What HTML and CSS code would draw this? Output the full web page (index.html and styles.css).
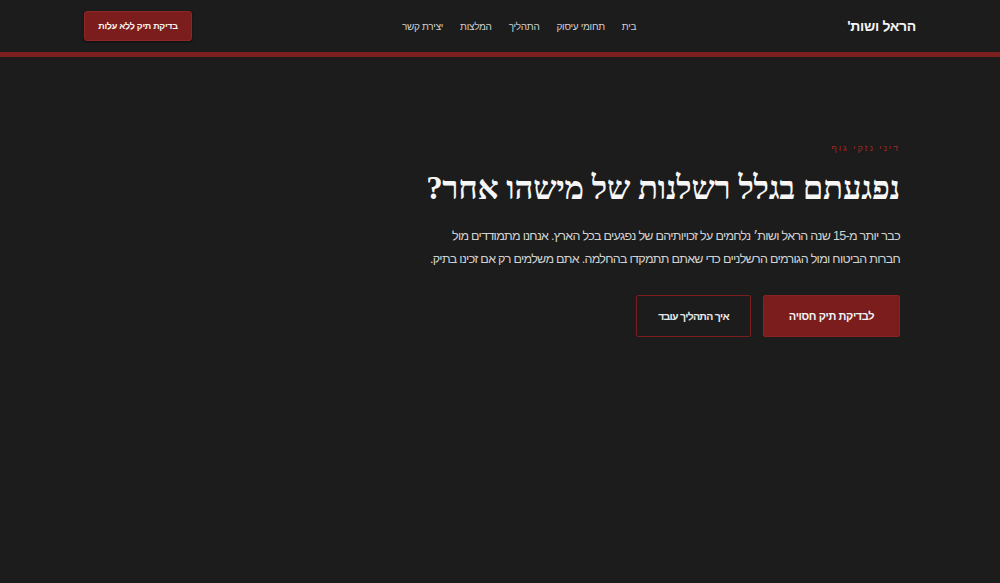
FILE: index.html
```html
<!DOCTYPE html>
<html lang="he" dir="rtl">
<head>
<meta charset="utf-8">
<title>הראל ושות'</title>
<link rel="stylesheet" href="styles.css">
</head>
<body>
<header class="site-header">
  <div class="header-inner">
    <div class="logo">הראל ושות'</div>
    <nav class="nav">
      <a href="#">בית</a>
      <a href="#">תחומי עיסוק</a>
      <a href="#">התהליך</a>
      <a href="#">המלצות</a>
      <a href="#">יצירת קשר</a>
    </nav>
    <a class="header-cta" href="#">בדיקת תיק ללא עלות</a>
  </div>
</header>
<div class="accent-bar"></div>
<main class="hero">
  <div class="hero-content">
    <div class="eyebrow">דיני נזקי גוף</div>
    <h1 class="hero-title">נפגעתם בגלל רשלנות של מישהו אחר?</h1>
    <p class="hero-text">כבר יותר מ-15 שנה הראל ושות׳ נלחמים על זכויותיהם של נפגעים בכל הארץ. אנחנו מתמודדים מול<br>חברות הביטוח ומול הגורמים הרשלניים כדי שאתם תתמקדו בהחלמה. אתם משלמים רק אם זכינו בתיק.</p>
    <div class="hero-actions">
      <a class="btn btn-primary" href="#">לבדיקת תיק חסויה</a>
      <a class="btn btn-outline" href="#">איך התהליך עובד</a>
    </div>
  </div>
</main>
</body>
</html>
```
FILE: styles.css
```css
* { box-sizing: border-box; }
html, body { margin: 0; padding: 0; }
body {
  background: #1c1c1c;
  color: #e8e8e8;
  font-family: "Liberation Sans", "DejaVu Sans", sans-serif;
  min-height: 583px;
}
a { text-decoration: none; color: inherit; }
.site-header { height: 52px; }
.header-inner {
  height: 52px;
  padding: 0 84px;
  display: flex;
  align-items: center;
}
.logo {
  font-weight: 700;
  font-size: 14px;
  letter-spacing: -0.3px;
  color: #f4f4f4;
}
.nav {
  display: flex;
  gap: 17px;
  font-size: 10px;
  letter-spacing: -0.3px;
  color: #cfcfcf;
  margin-right: 211px;
}
.header-cta {
  margin-right: auto;
  background: #7b1d1d;
  border: 1px solid #8e2626;
  border-radius: 3px;
  color: #f4f4f4;
  font-size: 9px;
  letter-spacing: -0.3px;
  font-weight: 700;
  height: 30px;
  width: 108px;
  display: flex;
  align-items: center;
  justify-content: center;
  box-shadow: 0 1px 3px rgba(0,0,0,0.5);
}
.accent-bar { height: 5px; background: #7b1f1f; }
.hero { padding: 85px 100px 0; display: flex; }
.hero-content { width: 480px; }
.eyebrow {
  color: #a02828;
  font-size: 9px;
  line-height: 12px;
  letter-spacing: 1.9px;
  margin-bottom: 14px;
}
.hero-title {
  margin: 0 0 16px;
  font-family: "Liberation Serif", "DejaVu Serif", serif;
  font-weight: 700;
  font-size: 33px;
  line-height: 1.25;
  letter-spacing: -0.3px;
  white-space: nowrap;
  color: #f6f6f6;
}
.hero-text {
  margin: 0 0 24px;
  font-size: 12.5px;
  letter-spacing: -0.7px;
  line-height: 23px;
  color: #d2d2d2;
  white-space: nowrap;
}
.hero-actions { display: flex; gap: 12px; }
.btn {
  height: 42px;
  display: flex;
  align-items: center;
  justify-content: center;
  font-size: 11px;
  letter-spacing: -0.4px;
  font-weight: 700;
  border-radius: 2px;
}
.btn-primary {
  width: 137px;
  background: #7b1d1d;
  color: #f4f4f4;
  border: 1px solid #862323;
}
.btn-outline {
  width: 115px;
  font-size: 10.5px;
  letter-spacing: -0.7px;
  border: 1px solid #7b1d1d;
  color: #e8e8e8;
  background: transparent;
}
```
